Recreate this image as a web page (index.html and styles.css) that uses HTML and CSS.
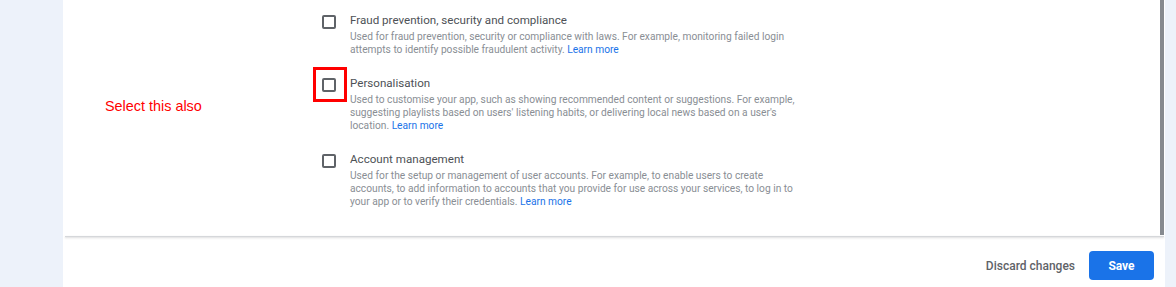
FILE: index.html
```html
<!DOCTYPE html>
<html lang="en">
<head>
<meta charset="utf-8">
<title>Data use</title>
<link rel="stylesheet" href="styles.css">
</head>
<body>
<div class="page">
  <div class="gutter-left"></div>
  <div class="card">
    <div class="scroll">
      <div class="content">
        <ul class="options">
          <li class="option">
            <span class="checkbox"></span>
            <div class="text">
              <div class="label">Fraud prevention, security and compliance</div>
              <p class="desc">Used for fraud prevention, security or compliance with laws. For example, monitoring failed login attempts to identify possible fraudulent activity. <a href="#">Learn more</a></p>
            </div>
          </li>
          <li class="option">
            <span class="checkbox"></span>
            <div class="text">
              <div class="label">Personalisation</div>
              <p class="desc">Used to customise your app, such as showing recommended content or suggestions. For example, suggesting playlists based on users' listening habits, or delivering local news based on a user's location. <a href="#">Learn more</a></p>
            </div>
          </li>
          <li class="option">
            <span class="checkbox"></span>
            <div class="text">
              <div class="label">Account management</div>
              <p class="desc">Used for the setup or management of user accounts. For example, to enable users to create accounts, to add information to accounts that you provide for use across your services, to log in to your app or to verify their credentials. <a href="#">Learn more</a></p>
            </div>
          </li>
        </ul>
        <div class="annot-box"></div>
        <div class="annot-text">Select this also</div>
      </div>
      <div class="scrollbar"></div>
    </div>
    <div class="divider"></div>
    <div class="footer">
      <button class="btn-text">Discard changes</button>
      <button class="btn-primary">Save</button>
    </div>
  </div>
  <div class="gutter-right"></div>
</div>
</body>
</html>
```

FILE: styles.css
```css
html, body {
  margin: 0;
  padding: 0;
}
body {
  background: #edf2fa;
  font-family: Roboto, "Liberation Sans", Arial, sans-serif;
  width: 1176px;
  height: 287px;
  overflow: hidden;
}
.page {
  display: flex;
  height: 287px;
}
.gutter-left {
  width: 63px;
  flex: none;
}
.gutter-right {
  width: 11px;
  flex: none;
}
.card {
  flex: 1;
  background: #ffffff;
  display: flex;
  flex-direction: column;
}
.scroll {
  height: 236px;
  display: flex;
}
.content {
  flex: 1;
  position: relative;
}
.scrollbar {
  width: 4px;
  margin-right: 1px;
  background: #868a8f;
  height: 235px;
}
.options {
  list-style: none;
  margin: 0;
  padding: 12px 0 0 259px;
}
.option {
  display: flex;
  gap: 14px;
  margin-bottom: 19px;
}
.checkbox {
  flex: none;
  width: 10px;
  height: 10px;
  border: 2px solid #5f6368;
  border-radius: 2px;
  margin-top: 3px;
}
.text {
  width: 452px;
}
.label {
  font-size: 11.6px;
  line-height: 16px;
  color: #4d5156;
}
.desc {
  margin: 2px 0 0;
  font-size: 10.2px;
  line-height: 13px;
  color: #898e94;
}
.desc a {
  color: #1a73e8;
  text-decoration: none;
}
.annot-box {
  position: absolute;
  left: 250px;
  top: 67px;
  width: 28px;
  height: 29px;
  border: 3px solid #ff0000;
}
.annot-text {
  position: absolute;
  left: 42px;
  top: 97px;
  font-family: "Liberation Sans", Arial, sans-serif;
  font-size: 14.4px;
  line-height: 18px;
  color: #ff0000;
}
.divider {
  height: 1px;
  margin-left: 2px;
  margin-right: 1px;
  background: #d5d7da;
  box-shadow: 0 1px 2px rgba(60, 64, 67, 0.25);
}
.footer {
  flex: 1;
  display: flex;
  justify-content: flex-end;
  align-items: flex-start;
  gap: 14px;
  padding: 14px 11px 0 0;
}
.btn-text {
  border: none;
  background: none;
  padding: 0;
  height: 29px;
  font-family: Roboto, "Liberation Sans", Arial, sans-serif;
  font-size: 12px;
  font-weight: 500;
  color: #5f6368;
}
.btn-primary {
  border: none;
  width: 65px;
  height: 29px;
  border-radius: 4px;
  background: #1a73e8;
  color: #ffffff;
  font-family: Roboto, "Liberation Sans", Arial, sans-serif;
  font-size: 12px;
  font-weight: 700;
}
```
